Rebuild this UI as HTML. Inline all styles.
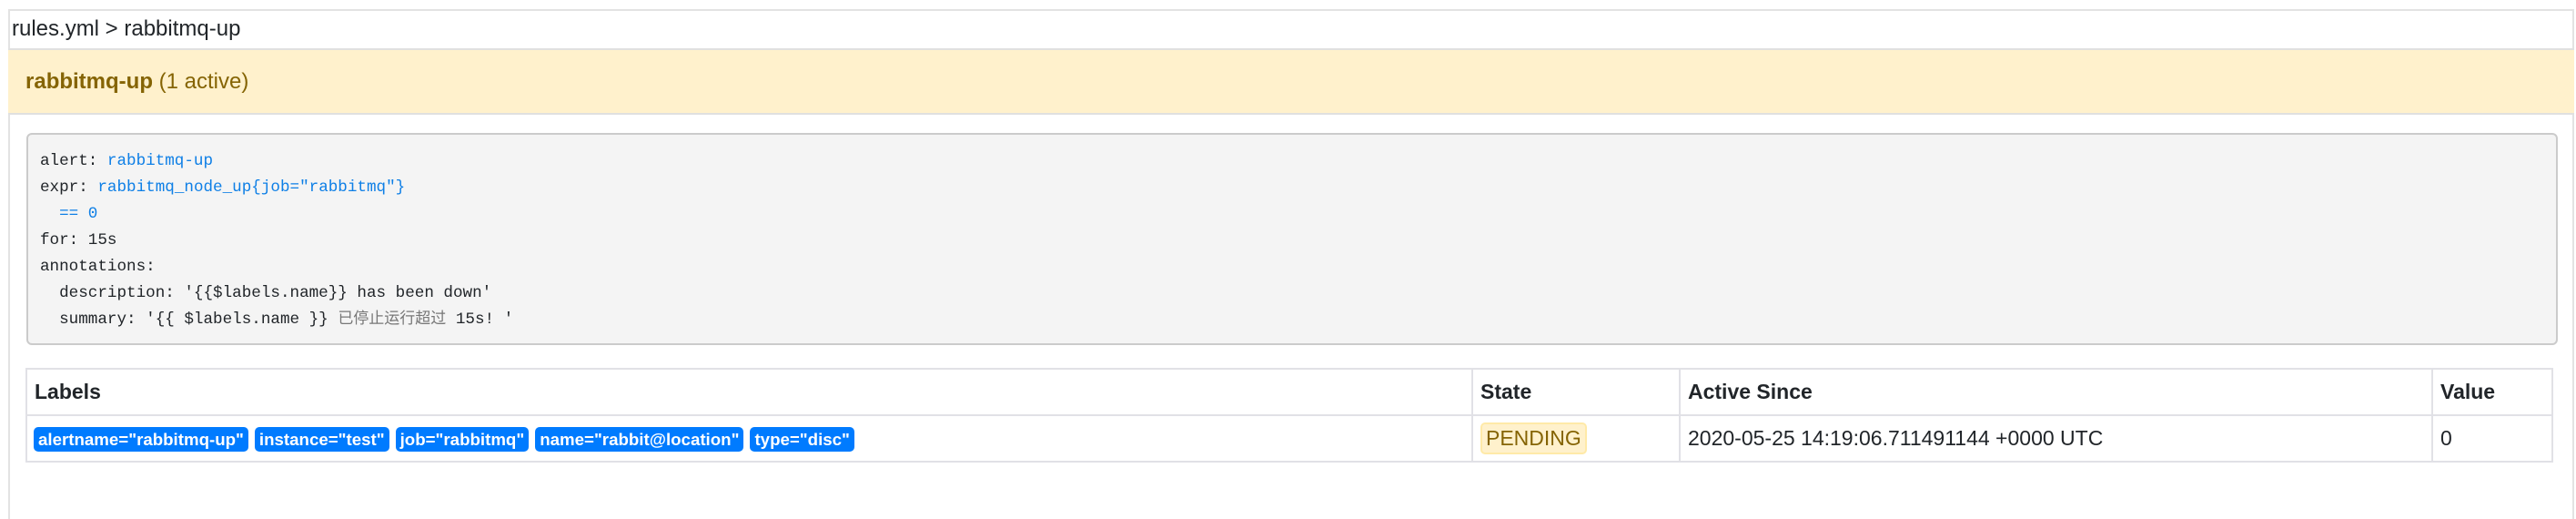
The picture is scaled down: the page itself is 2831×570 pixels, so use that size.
<!DOCTYPE html>
<html><head><meta charset="utf-8"><style>
*{box-sizing:border-box;margin:0;padding:0}
body{width:2831px;height:548px;background:#fff;position:relative;overflow:hidden;font-family:"Liberation Sans","Noto Sans CJK SC",sans-serif;color:#212529}
.card{position:absolute;left:9px;top:10px;width:2820px;height:560px;border:2px solid #e3e3e3;border-bottom:none}
.bc{position:absolute;left:13px;top:10px;height:43px;line-height:43px;font-size:24px;color:#212529}
.hd{position:absolute;left:9px;top:53px;width:2820px;height:73px;background:#fff1cc;border-top:2px solid #e0e0e0;border-bottom:2px solid #e0e0e0;color:#856404;font-size:24px;line-height:69px;padding-left:19px}
.hd b{font-weight:bold}
pre{position:absolute;left:29px;top:146px;width:2782px;height:233px;background:#f4f4f4;border:2px solid #cbcbcb;border-radius:6px;padding:15px 13px;font-family:"Liberation Mono","Noto Sans CJK SC",monospace;font-size:17.6px;line-height:29px;color:#212529}
pre div{height:29px;line-height:29px;white-space:pre;overflow:visible}
.v{color:#0e7fe6}
.cj{color:#777;font-family:"Noto Sans CJK SC",sans-serif;font-size:17px;line-height:0}
table{position:absolute;left:28px;top:404px;width:2778px;border-collapse:collapse;font-size:23px}
td,th{border:2px solid #e1e1e6;padding:0 8px;text-align:left}
tr{height:51px}
th{font-weight:bold;height:51px}
.b{display:inline-block;background:#007bff;color:#fff;font-weight:bold;font-size:18.7px;height:27px;line-height:27px;padding:0 5px;border-radius:5px;margin-right:7px;vertical-align:middle}
.p{display:inline-block;background:#fff1cc;border:2px solid #ffeaa8;color:#856404;border-radius:5px;height:35px;line-height:31px;padding:0 4px;font-size:23px}
</style></head><body>
<div class="card"></div>
<div class="bc">rules.yml &gt; rabbitmq-up</div>
<div class="hd"><b>rabbitmq-up</b> (1 active)</div>
<pre><div>alert: <span class="v">rabbitmq-up</span></div><div>expr: <span class="v">rabbitmq_node_up{job="rabbitmq"}</span></div><div><span class="v">  == 0</span></div><div>for: 15s</div><div>annotations:</div><div>  description: '{{$labels.name}} has been down'</div><div>  summary: '{{ $labels.name }} <span class="cj">已停止运行超过</span> 15s! '</div></pre>
<table>
<tr><th style="width:1589px">Labels</th><th style="width:228px">State</th><th style="width:827px">Active Since</th><th>Value</th></tr>
<tr><td style="padding-left:7px"><span class="b">alertname="rabbitmq-up"</span><span class="b">instance="test"</span><span class="b">job="rabbitmq"</span><span class="b">name="rabbit@location"</span><span class="b">type="disc"</span></td><td><span class="p">PENDING</span></td><td>2020-05-25 14:19:06.711491144 +0000 UTC</td><td>0</td></tr>
</table>
</body></html>
